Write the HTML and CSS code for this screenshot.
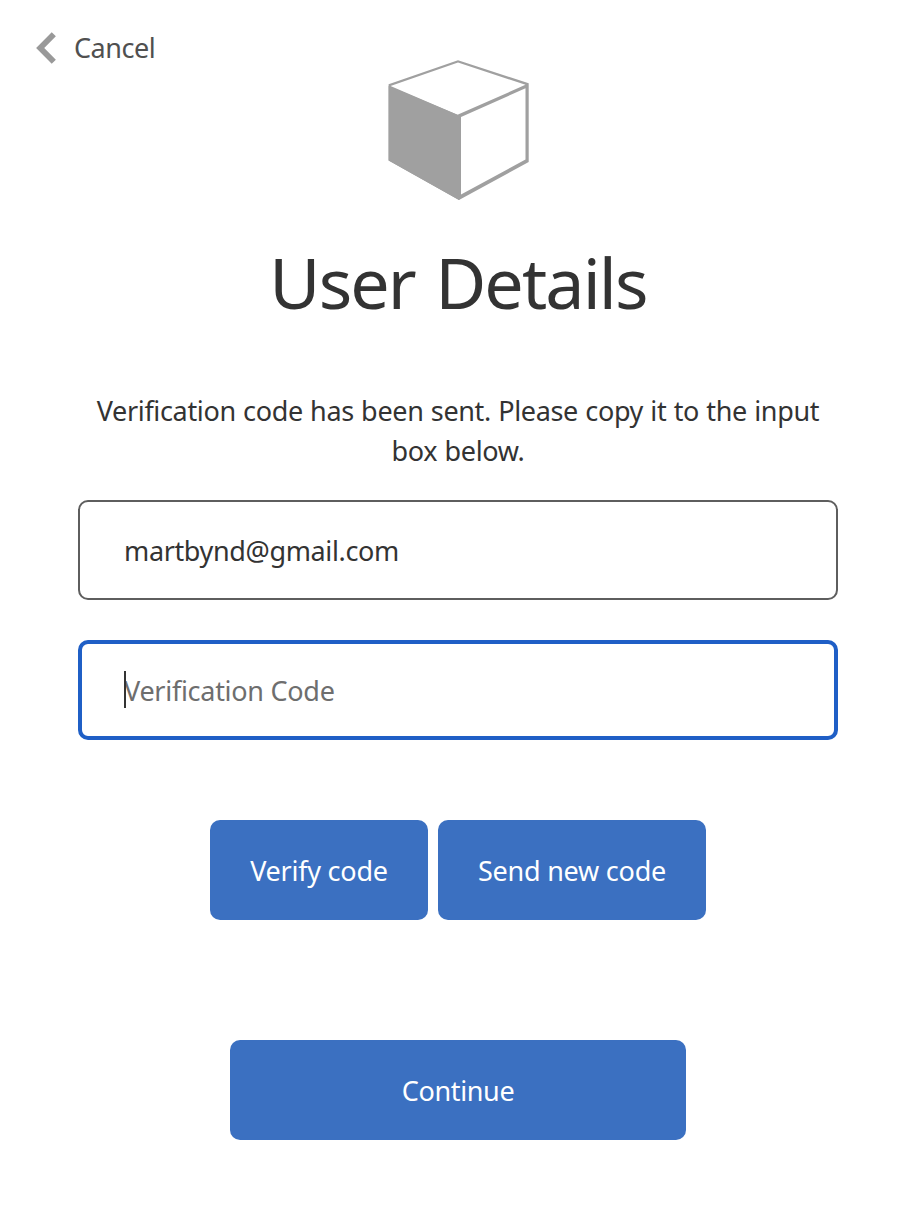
FILE: index.html
```html
<!DOCTYPE html>
<html lang="en">
<head>
<meta charset="utf-8">
<title>User Details</title>
<link rel="stylesheet" href="styles.css">
</head>
<body>
<main class="page">
  <header class="header">
    <a class="cancel">
      <svg class="chevron" width="20" height="32" viewBox="0 0 20 32"><path d="M17.800 2.200 4.200 16l13.600 13.800" fill="none" stroke="#999" stroke-width="5.800"/></svg>
      <span class="cancel-label">Cancel</span>
    </a>
    <svg class="logo" width="142" height="142" viewBox="0 0 142 142">
      <path fill="#a0a0a0" d="M0.600 27 70 56 73 57V138L71 141 0.600 101.500Z"/>
      <path fill="#a0a0a0" fill-rule="evenodd" d="M0.600 25.300 70 1.200 140.700 24.300V103L71 141 0.600 101.500ZM2.500 27 69.500 55.800 137.500 25.800 70 3.600ZM73 58V135.500L137.500 100.500V29.300Z"/>
    </svg>
  </header>
  <h1 class="title">User Details</h1>
  <form class="form">
    <p class="message">Verification code has been sent. Please copy it to the input<br>box below.</p>
    <div class="field"><input class="input email" type="text" value="martbynd@gmail.com" aria-label="Email"></div>
    <div class="field"><input class="input code" type="text" placeholder="Verification Code"><span class="caret"></span></div>
    <div class="actions">
      <button class="button verify" type="button">Verify code</button>
      <button class="button resend" type="button">Send new code</button>
    </div>
    <button class="button continue" type="button">Continue</button>
  </form>
</main>
</body>
</html>
```
FILE: styles.css
```css
* { box-sizing: border-box; }
body { margin: 0; background: #fff; }
.page {
  width: 916px;
  height: 1210px;
  font: 27px/40px "Segoe UI", "Noto Sans", sans-serif;
  letter-spacing: -0.34px;
  word-spacing: 0.6px;
  color: #333;
}
.header {
  display: grid;
  grid-template-columns: 1fr 142px 1fr;
  height: 202px;
}
.cancel {
  display: flex;
  align-items: center;
  align-self: start;
  gap: 18px;
  height: 40px;
  margin: 28px 0 0 36px;
  color: #505050;
  letter-spacing: -0.45px;
}
.chevron, .logo { display: block; }
.logo { margin: 59px 0 0 1px; }
.title {
  height: 96px;
  margin: 32px 0 0;
  font-size: 70px;
  line-height: 96px;
  font-weight: 400;
  letter-spacing: -1.9px;
  word-spacing: 4px;
  text-align: center;
  white-space: nowrap;
}
.form {
  display: flex;
  flex-direction: column;
  align-items: center;
  padding-top: 61px;
}
.message {
  margin: 0 0 29px;
  text-align: center;
  white-space: nowrap;
}
.field {
  position: relative;
  width: 760px;
  height: 100px;
  margin-bottom: 40px;
}
.input {
  display: block;
  width: 100%;
  height: 100%;
  padding: 0 44px;
  border: 2px solid #5e5e5e;
  border-radius: 10px;
  background: #fff;
  color: #333;
  font: inherit;
  letter-spacing: -0.36px;
  outline: none;
}
.code {
  padding: 0 42px;
  border: 4px solid #1f5fc6;
  letter-spacing: -0.28px;
}
.code::placeholder { color: #6e6e6e; opacity: 1; }
.caret {
  position: absolute;
  left: 46px;
  top: 31px;
  width: 2px;
  height: 37px;
  background: #333;
}
.actions {
  display: flex;
  gap: 10px;
  margin: 40px 0 120px;
}
.button {
  height: 100px;
  padding: 2px 0 0;
  border: 0;
  border-radius: 10px;
  background: #3b70c1;
  color: #fff;
  font: inherit;
  letter-spacing: -0.24px;
  white-space: nowrap;
}
.verify { width: 218px; }
.resend { width: 268px; }
.continue { width: 456px; letter-spacing: -0.36px; }
```
